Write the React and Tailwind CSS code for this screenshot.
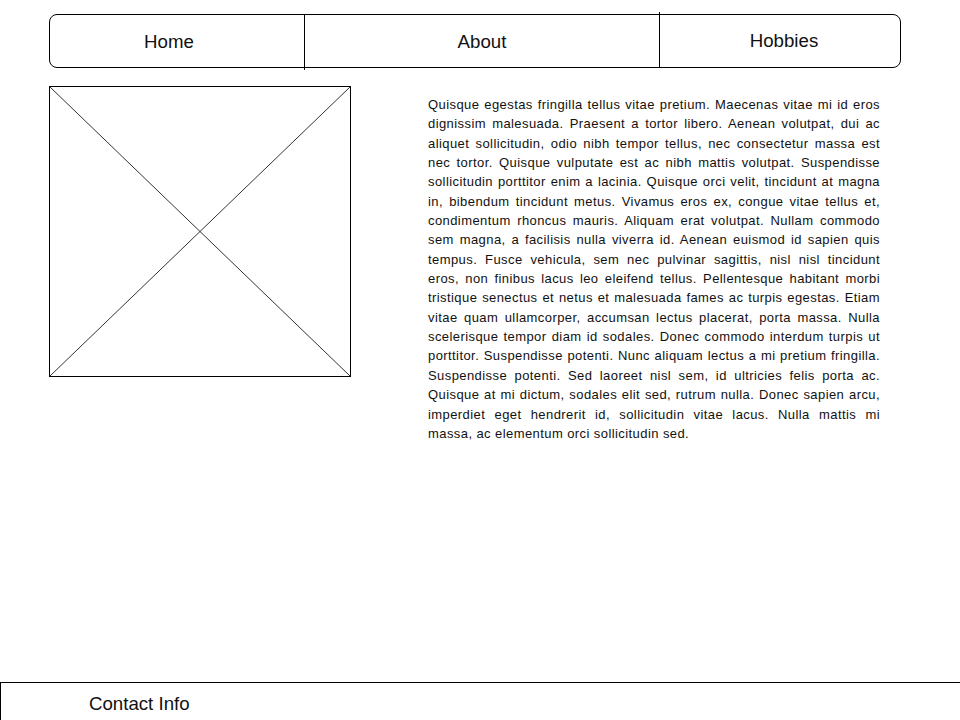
import React from "react";

const paragraph =
  "Quisque egestas fringilla tellus vitae pretium. Maecenas vitae mi id eros dignissim malesuada. Praesent a tortor libero. Aenean volutpat, dui ac aliquet sollicitudin, odio nibh tempor tellus, nec consectetur massa est nec tortor. Quisque vulputate est ac nibh mattis volutpat. Suspendisse sollicitudin porttitor enim a lacinia. Quisque orci velit, tincidunt at magna in, bibendum tincidunt metus. Vivamus eros ex, congue vitae tellus et, condimentum rhoncus mauris. Aliquam erat volutpat. Nullam commodo sem magna, a facilisis nulla viverra id. Aenean euismod id sapien quis tempus. Fusce vehicula, sem nec pulvinar sagittis, nisl nisl tincidunt eros, non finibus lacus leo eleifend tellus. Pellentesque habitant morbi tristique senectus et netus et malesuada fames ac turpis egestas. Etiam vitae quam ullamcorper, accumsan lectus placerat, porta massa. Nulla scelerisque tempor diam id sodales. Donec commodo interdum turpis ut porttitor. Suspendisse potenti. Nunc aliquam lectus a mi pretium fringilla. Suspendisse potenti. Sed laoreet nisl sem, id ultricies felis porta ac. Quisque at mi dictum, sodales elit sed, rutrum nulla. Donec sapien arcu, imperdiet eget hendrerit id, sollicitudin vitae lacus. Nulla mattis mi massa, ac elementum orci sollicitudin sed.";

export default function App() {
  return (
    <div
      className="w-[960px] h-[720px] flex flex-col bg-white text-[#111]"
      style={{ fontFamily: '"Liberation Sans", Arial, sans-serif' }}
    >
      {/* top nav */}
      <nav className="ml-[49px] mt-[14px] w-[852px] h-[54px] flex border border-black rounded-lg text-[18.67px]">
        <a className="w-[254px] flex items-center justify-center pr-4 pt-[1px]">Home</a>
        <div className="w-px bg-black -mt-px -mb-[3px]" />
        <a className="w-[354px] flex items-center justify-center pt-[1px]">About</a>
        <div className="w-px bg-black -mt-[3px] -mb-px" />
        <a className="flex-1 flex items-center justify-center pl-2 pb-px">Hobbies</a>
      </nav>

      <main className="flex mt-[18px] ml-[49px]">
        {/* image placeholder */}
        <div className="w-[302px] h-[291px] border border-black shrink-0">
          <svg width="300" height="289" viewBox="0 0 300 289" className="block">
            <line x1="0" y1="0" x2="300" y2="289" stroke="#333" strokeWidth="1" />
            <line x1="300" y1="0" x2="0" y2="289" stroke="#333" strokeWidth="1" />
          </svg>
        </div>

        <p className="ml-[77px] mt-[9px] w-[452px] text-[13px] tracking-[0.42px] leading-[19.35px] text-justify">
          {paragraph}
        </p>
      </main>

      <footer className="mt-auto h-[38px] border-t border-l border-black flex items-center pl-[88px] pt-[5px] text-[18.67px]">
        Contact Info
      </footer>
    </div>
  );
}
